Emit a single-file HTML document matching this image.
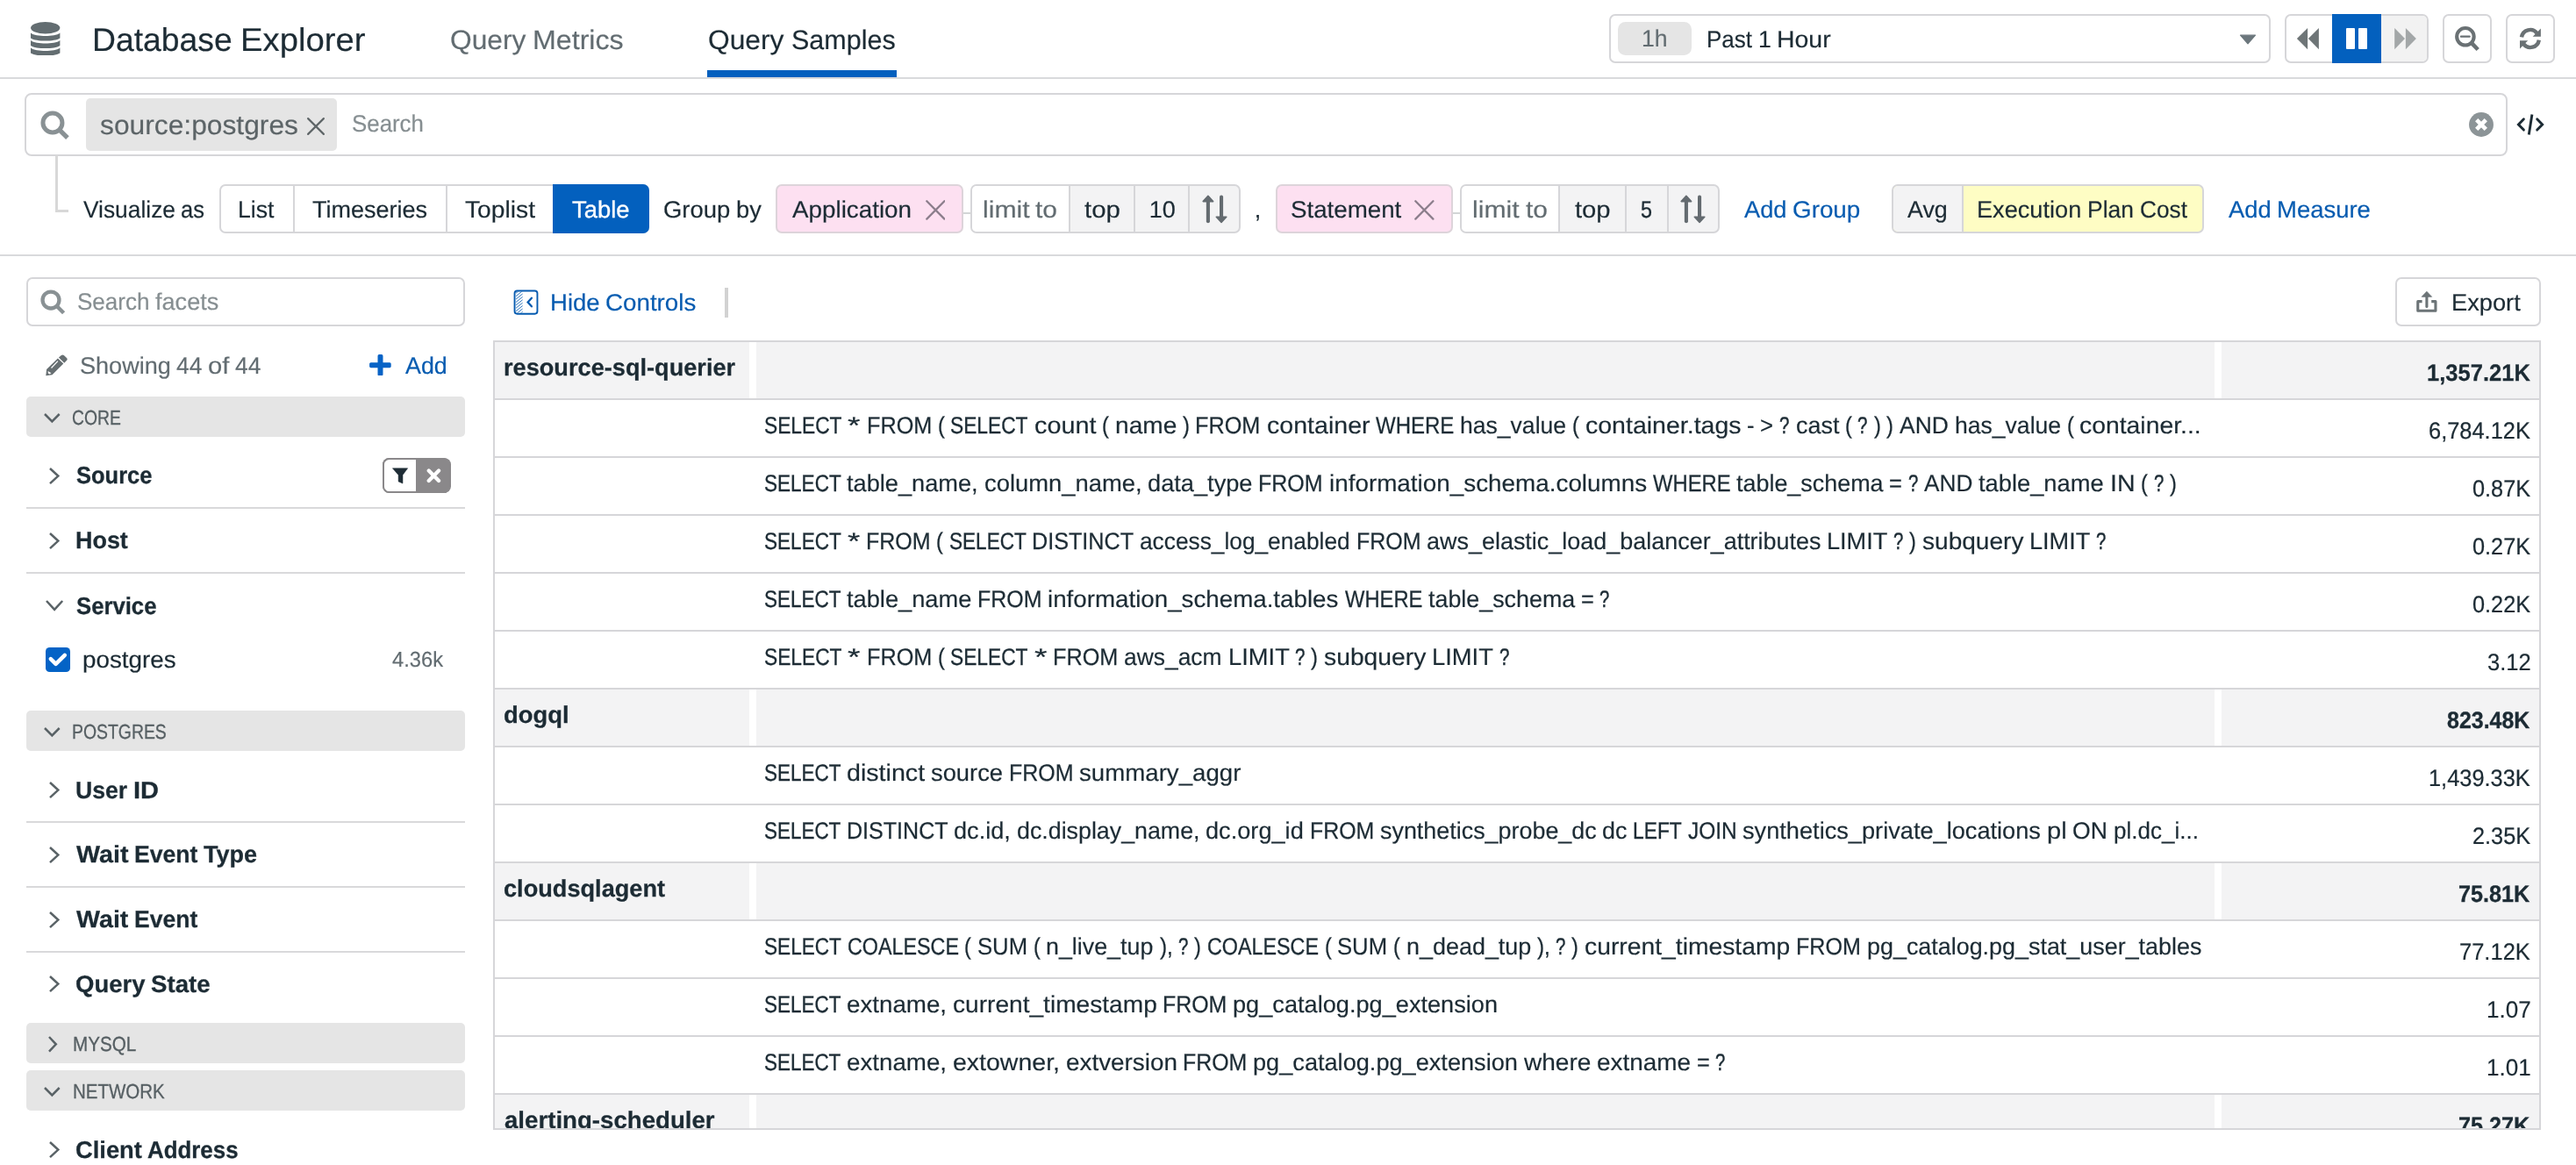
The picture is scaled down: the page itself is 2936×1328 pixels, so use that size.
<!DOCTYPE html>
<html><head><meta charset="utf-8"><title>Database Explorer</title>
<style>
html,body{margin:0;padding:0;background:#fff;}
body{width:2936px;height:1328px;position:relative;overflow:hidden;font-family:"Liberation Sans",sans-serif;color:#1c2b34;}
#root{position:absolute;left:0;top:0;width:2936px;height:1328px;overflow:hidden;will-change:transform;}
.b{position:absolute;box-sizing:border-box;}
.t{position:absolute;white-space:pre;line-height:1;text-rendering:geometricPrecision;transform-origin:0 50%;-webkit-text-stroke:0.18px currentColor;}
.tb{font-weight:bold;-webkit-text-stroke:0.25px currentColor;}
</style></head>
<body>
<div id="root">
<div class="b" style="left:0px;top:88px;width:2936px;height:2px;background:#d9dadc;"></div>
<svg class="b" style="left:35.3px;top:24.5px;" width="33.4" height="38.6" viewBox="0 0 33.4 38.6"><g fill="#636d71"><ellipse cx="16.7" cy="6.8" rx="16.7" ry="6.8"/><path d="M0,12.60 C3.2,15.20 10,16.10 16.7,16.10 S30.2,15.20 33.4,12.60 L33.4,18.50 C30.2,20.70 23.4,21.60 16.7,21.60 S3.2,20.70 0,18.50 Z"/><path d="M0,21.10 C3.2,23.70 10,24.60 16.7,24.60 S30.2,23.70 33.4,21.10 L33.4,27.00 C30.2,29.20 23.4,30.10 16.7,30.10 S3.2,29.20 0,27.00 Z"/><path d="M0,29.60 C3.2,32.20 10,33.10 16.7,33.10 S30.2,32.20 33.4,29.60 L33.4,35.50 C30.2,37.70 23.4,38.60 16.7,38.60 S3.2,37.70 0,35.50 Z"/></g></svg>
<span class="t" style="left:105.00px;top:27.01px;font-size:37.2px;transform:scaleX(1.0027);">Database</span><span class="t" style="left:273.98px;top:27.01px;font-size:37.2px;transform:scaleX(1.0284);">Explorer</span>
<span class="t" style="left:513.00px;top:30.59px;font-size:30.9px;color:#626c71;transform:scaleX(1.0277);">Query</span><span class="t" style="left:607.24px;top:30.59px;font-size:30.9px;color:#626c71;transform:scaleX(1.0419);">Metrics</span>
<span class="t" style="left:807.25px;top:30.59px;font-size:30.9px;transform:scaleX(1.0280);">Query</span><span class="t" style="left:901.51px;top:30.59px;font-size:30.9px;transform:scaleX(0.9875);">Samples</span>
<div class="b" style="left:806px;top:80px;width:216px;height:8px;background:#0360be;"></div>
<div class="b" style="left:1834px;top:16px;width:754px;height:56px;background:#fff;border:2px solid #d6d6d9;border-radius:7px;"></div>
<div class="b" style="left:1844px;top:25px;width:84px;height:38px;background:#e5e5e5;border-radius:8.5px;"></div>
<span class="t" style="left:1870.83px;top:30.59px;font-size:27px;color:#626c71;transform:scaleX(0.9846);">1h</span>
<span class="t" style="left:1945.00px;top:31.64px;font-size:27px;transform:scaleX(0.9629);">Past</span><span class="t" style="left:2003.77px;top:31.64px;font-size:27px;transform:scaleX(0.9879);">1</span><span class="t" style="left:2025.34px;top:31.64px;font-size:27px;transform:scaleX(1.0534);">Hour</span>
<svg class="b" style="left:2552px;top:39px;" width="20" height="12" viewBox="0 0 20 12"><path d="M1.5,1.2 L18.5,1.2 L10,10.8 Z" fill="#6b767c" stroke="#6b767c" stroke-width="1.2" stroke-linejoin="round"/></svg>
<div class="b" style="left:2604px;top:16px;width:164px;height:56px;background:#fff;border:2px solid #d6d6d9;border-radius:7px;"></div>
<div class="b" style="left:2714px;top:18px;width:52px;height:52px;background:#f2f2f2;border-radius:0 5px 5px 0;"></div>
<div class="b" style="left:2658px;top:16px;width:56px;height:56px;background:#0360be;"></div>
<svg class="b" style="left:2617px;top:31px;" width="27" height="27" viewBox="0 0 27 27"><g fill="#6e7577"><path d="M13.1,0.9 L13.1,25.3 L0.9,13.1 Z"/><path d="M25.9,0.9 L25.9,25.3 L13.9,13.1 Z"/></g></svg>
<div class="b" style="left:2673.6px;top:31.7px;width:10.4px;height:24.6px;background:#fff;border-radius:1px;"></div>
<div class="b" style="left:2687.9px;top:31.7px;width:10.2px;height:24.6px;background:#fff;border-radius:1px;"></div>
<svg class="b" style="left:2728px;top:31px;" width="27" height="27" viewBox="0 0 27 27"><g fill="#a3a7a8"><path d="M1.2,0.9 L1.2,25.3 L13,13.1 Z"/><path d="M13.9,0.9 L13.9,25.3 L25.9,13.1 Z"/></g></svg>
<div class="b" style="left:2784px;top:16px;width:56px;height:56px;background:#fff;border:2px solid #d6d6d9;border-radius:7px;"></div>
<svg class="b" style="left:2796px;top:28px;" width="32" height="32" viewBox="0 0 32 32"><g fill="none" stroke="#6a7174"><circle cx="13.9" cy="13.8" r="9.75" stroke-width="4.1"/><path d="M20.6,20.7 L28.2,28.5" stroke-width="4.6"/><path d="M8.9,13.65 L18.7,13.65" stroke-width="2.2" stroke-linecap="round"/></g></svg>
<div class="b" style="left:2856px;top:16px;width:56px;height:56px;background:#fff;border:2px solid #d6d6d9;border-radius:7px;"></div>
<svg class="b" style="left:2870px;top:30px;" width="28" height="28" viewBox="0 0 28 28"><g fill="none" stroke="#6a7174" stroke-width="4.4"><path d="M4.0,12.4 A9.9,9.9 0 0 1 21.6,7.8"/><path d="M23.8,15.6 A9.9,9.9 0 0 1 6.2,20.2"/></g><g fill="#6a7174"><path d="M25.9,2.6 L25.9,11.8 L16.7,11.8 Z"/><path d="M2.0,25.4 L2.0,16.2 L11.2,16.2 Z"/></g></svg>
<div class="b" style="left:28px;top:106px;width:2830px;height:72px;background:#fff;border:2px solid #d6d6d9;border-radius:8px;"></div>
<svg class="b" style="left:45.5px;top:125.5px;" width="34.0" height="34.0" viewBox="0 0 34 34"><g fill="none" stroke="#899194"><circle cx="13.95" cy="14" r="11" stroke-width="5"/><path d="M21.6,21.8 L30.9,31.1" stroke-width="5.2" stroke-linecap="butt"/></g></svg>
<div class="b" style="left:98px;top:112px;width:286px;height:60px;background:#e5e5e5;border-radius:5px;"></div>
<span class="t" style="left:114.25px;top:128.34px;font-size:30.9px;color:#5c6467;transform:scaleX(1.0281);">source:postgres</span>
<svg class="b" style="left:349px;top:133px;" width="22" height="22" viewBox="0 0 22 22"><path d="M2.1,2.1 L19.9,19.9 M19.9,2.1 L2.1,19.9" stroke="#5f6668" stroke-width="2.2" fill="none" stroke-linecap="round"/></svg>
<span class="t" style="left:400.79px;top:127.89px;font-size:27px;color:#868e91;transform:scaleX(0.9577);">Search</span>
<svg class="b" style="left:2814px;top:128px;" width="28" height="28" viewBox="0 0 28 28"><circle cx="14" cy="14" r="13.95" fill="#8c9497"/><path d="M8.7,8.7 L19.3,19.3 M19.3,8.7 L8.7,19.3" stroke="#fff" stroke-width="4.7" stroke-linecap="butt"/></svg>
<svg class="b" style="left:2867px;top:129px;" width="34" height="26" viewBox="0 0 34 26"><g fill="none" stroke="#1c2b34" stroke-width="2.9" stroke-linejoin="miter"><path d="M9.4,6.7 L3.4,12.9 L9.4,19.1" stroke-linecap="round"/><path d="M24.7,6.7 L30.7,12.9 L24.7,19.1" stroke-linecap="round"/><path d="M18.9,1.5 L15.3,24.5"/></g></svg>
<div class="b" style="left:62.5px;top:177px;width:3px;height:65px;background:#d8d8d8;"></div>
<div class="b" style="left:62.5px;top:239px;width:15.5px;height:3px;background:#d8d8d8;"></div>
<span class="t" style="left:94.50px;top:226.14px;font-size:27px;transform:scaleX(0.9757);">Visualize</span><span class="t" style="left:206.16px;top:226.14px;font-size:27px;-webkit-text-stroke:0.24px currentColor;transform:scaleX(0.9413);">as</span>
<div class="b" style="left:250px;top:210px;width:490px;height:56px;background:#fff;border:2px solid #d6d6d9;border-radius:7px;"></div>
<div class="b" style="left:334px;top:212px;width:2px;height:52px;background:#d6d6d9;"></div>
<div class="b" style="left:508px;top:212px;width:2px;height:52px;background:#d6d6d9;"></div>
<div class="b" style="left:630px;top:210px;width:110px;height:56px;background:#0360be;border-radius:0 7px 7px 0;"></div>
<span class="t" style="left:271.03px;top:226.14px;font-size:27px;transform:scaleX(0.9873);">List</span>
<span class="t" style="left:356.00px;top:226.14px;font-size:27px;">Timeseries</span>
<span class="t" style="left:529.50px;top:226.14px;font-size:27px;transform:scaleX(1.0451);">Toplist</span>
<span class="t" style="left:651.90px;top:226.14px;font-size:27px;color:#fff;-webkit-text-stroke:0.32px currentColor;transform:scaleX(1.0137);">Table</span>
<span class="t" style="left:756.00px;top:226.14px;font-size:27px;transform:scaleX(1.0166);">Group</span><span class="t" style="left:838.94px;top:226.14px;font-size:27px;transform:scaleX(1.0102);">by</span>
<div class="b" style="left:884px;top:210px;width:214px;height:56px;background:#fde0f1;border:2px solid #ddd4da;border-radius:7px;"></div>
<span class="t" style="left:903.25px;top:226.14px;font-size:27px;transform:scaleX(1.0300);">Application</span>
<svg class="b" style="left:1054.5px;top:228.4px;" width="22.7" height="22.9" viewBox="0 0 22.7 22.9"><path d="M1.3,1.3 L21.4,21.599999999999998 M21.4,1.3 L1.3,21.599999999999998" stroke="#8c7e8c" stroke-width="2.3" fill="none" stroke-linecap="round"/></svg>
<div class="b" style="left:1098px;top:242px;width:8px;height:2px;background:#d3d5d6;"></div>
<div class="b" style="left:1106px;top:210px;width:308px;height:56px;background:#f3f3f4;border:2px solid #d6d6d9;border-radius:7px;"></div>
<div class="b" style="left:1108px;top:212px;width:110px;height:52px;background:#fff;border-radius:5px 0 0 5px;"></div>
<div class="b" style="left:1218px;top:212px;width:2px;height:52px;background:#d6d6d9;"></div>
<div class="b" style="left:1292px;top:212px;width:2px;height:52px;background:#d6d6d9;"></div>
<div class="b" style="left:1354px;top:212px;width:2px;height:52px;background:#d6d6d9;"></div>
<span class="t" style="left:1119.75px;top:226.14px;font-size:27px;color:#626c71;transform:scaleX(1.1159);">limit</span><span class="t" style="left:1180.03px;top:226.14px;font-size:27px;color:#626c71;transform:scaleX(1.1098);">to</span>
<span class="t" style="left:1236.00px;top:226.14px;font-size:27px;transform:scaleX(1.0885);">top</span>
<span class="t" style="left:1309.75px;top:226.14px;font-size:27px;">10</span>
<svg class="b" style="left:1369.5px;top:221.5px;" width="29" height="33" viewBox="0 0 29 33"><g stroke="#646b70" stroke-width="4.1" fill="none" stroke-linecap="round"><path d="M6.9,6 L6.9,30.2"/><path d="M22.05,2.5 L22.05,27"/></g><g fill="#646b70" stroke="#646b70" stroke-width="1.6" stroke-linejoin="round"><path d="M6.9,1.3 L12.6,7.6 L1.2,7.6 Z"/><path d="M22.05,31.4 L27.8,25.3 L16.3,25.3 Z"/></g></svg>
<span class="t" style="left:1429.80px;top:226.14px;font-size:27px;">,</span>
<div class="b" style="left:1454px;top:210px;width:202px;height:56px;background:#fde0f1;border:2px solid #ddd4da;border-radius:7px;"></div>
<span class="t" style="left:1471.22px;top:226.14px;font-size:27px;transform:scaleX(1.0260);">Statement</span>
<svg class="b" style="left:1612.2px;top:228.4px;" width="22.7" height="22.9" viewBox="0 0 22.7 22.9"><path d="M1.3,1.3 L21.4,21.599999999999998 M21.4,1.3 L1.3,21.599999999999998" stroke="#8c7e8c" stroke-width="2.3" fill="none" stroke-linecap="round"/></svg>
<div class="b" style="left:1656px;top:242px;width:8px;height:2px;background:#d3d5d6;"></div>
<div class="b" style="left:1664px;top:210px;width:296px;height:56px;background:#f3f3f4;border:2px solid #d6d6d9;border-radius:7px;"></div>
<div class="b" style="left:1666px;top:212px;width:110px;height:52px;background:#fff;border-radius:5px 0 0 5px;"></div>
<div class="b" style="left:1776px;top:212px;width:2px;height:52px;background:#d6d6d9;"></div>
<div class="b" style="left:1852px;top:212px;width:2px;height:52px;background:#d6d6d9;"></div>
<div class="b" style="left:1900px;top:212px;width:2px;height:52px;background:#d6d6d9;"></div>
<span class="t" style="left:1678.25px;top:226.14px;font-size:27px;color:#626c71;transform:scaleX(1.1159);">limit</span><span class="t" style="left:1738.53px;top:226.14px;font-size:27px;color:#626c71;transform:scaleX(1.1098);">to</span>
<span class="t" style="left:1794.75px;top:226.14px;font-size:27px;transform:scaleX(1.0817);">top</span>
<span class="t" style="left:1869.63px;top:226.14px;font-size:27px;-webkit-text-stroke:0.33px currentColor;transform:scaleX(0.8654);">5</span>
<svg class="b" style="left:1915.3px;top:221.5px;" width="29" height="33" viewBox="0 0 29 33"><g stroke="#646b70" stroke-width="4.1" fill="none" stroke-linecap="round"><path d="M6.9,6 L6.9,30.2"/><path d="M22.05,2.5 L22.05,27"/></g><g fill="#646b70" stroke="#646b70" stroke-width="1.6" stroke-linejoin="round"><path d="M6.9,1.3 L12.6,7.6 L1.2,7.6 Z"/><path d="M22.05,31.4 L27.8,25.3 L16.3,25.3 Z"/></g></svg>
<span class="t" style="left:1987.50px;top:226.14px;font-size:27px;color:#065bb0;transform:scaleX(1.0093);">Add</span><span class="t" style="left:2042.73px;top:226.14px;font-size:27px;color:#065bb0;transform:scaleX(1.0299);">Group</span>
<div class="b" style="left:2156px;top:210px;width:356px;height:56px;background:#fefdc4;border:2px solid #d6d6d9;border-radius:7px;"></div>
<div class="b" style="left:2158px;top:212px;width:78px;height:52px;background:#f3f3f4;border-radius:5px 0 0 5px;"></div>
<div class="b" style="left:2236px;top:212px;width:2px;height:52px;background:#d6d6d9;"></div>
<span class="t" style="left:2174.00px;top:226.14px;font-size:27px;transform:scaleX(0.9940);">Avg</span>
<span class="t" style="left:2253.00px;top:226.14px;font-size:27px;transform:scaleX(1.0055);">Execution</span><span class="t" style="left:2378.98px;top:226.14px;font-size:27px;transform:scaleX(0.9817);">Plan</span><span class="t" style="left:2438.79px;top:226.14px;font-size:27px;transform:scaleX(0.9720);">Cost</span>
<span class="t" style="left:2539.50px;top:226.14px;font-size:27px;color:#065bb0;transform:scaleX(1.0125);">Add</span><span class="t" style="left:2594.91px;top:226.14px;font-size:27px;color:#065bb0;transform:scaleX(1.0172);">Measure</span>
<div class="b" style="left:0px;top:290px;width:2936px;height:2px;background:#d9dadc;"></div>
<div class="b" style="left:30px;top:316px;width:500px;height:56px;background:#fff;border:2px solid #d6d6d9;border-radius:7px;"></div>
<svg class="b" style="left:45.9px;top:330.1px;" width="29.24" height="29.24" viewBox="0 0 34 34"><g fill="none" stroke="#899194"><circle cx="13.95" cy="14" r="11" stroke-width="5"/><path d="M21.6,21.8 L30.9,31.1" stroke-width="5.2" stroke-linecap="butt"/></g></svg>
<span class="t" style="left:87.75px;top:331.39px;font-size:27px;color:#868e91;transform:scaleX(0.9645);">Search</span><span class="t" style="left:177.00px;top:331.39px;font-size:27px;color:#868e91;transform:scaleX(1.0030);">facets</span>
<svg class="b" style="left:51.5px;top:403.8px;" width="26" height="25" viewBox="0 0 26 25"><g fill="#676f72"><path d="M14.9,3.6 L17.9,1 Q19.4,-0.2 20.8,1.1 L24,4.1 Q25.3,5.4 24.1,6.8 L21.3,9.7 Z"/><path d="M13.9,4.6 L20.3,10.6 L7.5,23.3 L0.3,24.3 L1.1,17 Z"/></g><path d="M13.9,7.7 L6.5,15.5" stroke="#fff" stroke-width="1.2"/><path d="M2.6,19.1 L6.5,21.2 L4.3,22.6 L2.9,21.4 Z" fill="#fff"/></svg>
<span class="t" style="left:90.75px;top:403.89px;font-size:27px;color:#626c71;transform:scaleX(1.0022);">Showing</span><span class="t" style="left:201.21px;top:403.89px;font-size:27px;color:#626c71;transform:scaleX(0.9765);">44</span><span class="t" style="left:237.20px;top:403.89px;font-size:27px;color:#626c71;transform:scaleX(1.0804);">of</span><span class="t" style="left:268.19px;top:403.89px;font-size:27px;color:#626c71;transform:scaleX(0.9765);">44</span>
<svg class="b" style="left:421.1px;top:403.8px;" width="25" height="24.6" viewBox="0 0 25 24.6"><g fill="#0763c6"><rect x="9.5" y="0.1" width="6" height="24.3" rx="1.6"/><rect x="0.1" y="9.2" width="24.6" height="6" rx="1.6"/></g></svg>
<span class="t" style="left:462.00px;top:403.89px;font-size:27px;color:#065bb0;transform:scaleX(0.9942);">Add</span>
<div class="b" style="left:30px;top:452.25px;width:500px;height:45.5px;background:#e5e5e5;border-radius:5px;"></div>
<svg class="b" style="left:48.3px;top:468.85px;" width="22.7" height="14.4" viewBox="0 0 22.7 14.4"><path d="M3,3 L11.35,11.4 L19.7,3" stroke="#596266" stroke-width="2.5" fill="none" stroke-linecap="butt" stroke-linejoin="miter"/></svg>
<span class="t" style="left:82.42px;top:465.03px;font-size:23.3px;color:#565f63;-webkit-text-stroke:0.30px currentColor;transform:scaleX(0.8287);">CORE</span>
<svg class="b" style="left:54.1px;top:530.6px;" width="15.3" height="23.2" viewBox="0 0 15.3 23.2"><path d="M3,3 L12.3,11.6 L3,20.2" stroke="#596266" stroke-width="2.5" fill="none" stroke-linecap="butt" stroke-linejoin="miter"/></svg>
<span class="t tb" style="left:86.75px;top:528.39px;font-size:27.3px;-webkit-text-stroke:0.32px currentColor;transform:scaleX(0.9339);">Source</span>
<div class="b" style="left:30px;top:578px;width:500px;height:2px;background:#d9d9db;"></div>
<div class="b" style="left:436.1px;top:521.9px;width:78.1px;height:40.2px;background:#8a888a;border-radius:7.5px;"></div>
<div class="b" style="left:436.1px;top:521.9px;width:38px;height:40.2px;background:#fff;border:2px solid #8a888a;border-radius:7.5px 0 0 7.5px;border-right:none;"></div>
<svg class="b" style="left:446px;top:532.6px;" width="20" height="19.5" viewBox="0 0 20 19.5"><path d="M1.4,0.8 L18.7,0.8 L13,8.4 L13,18.1 L8.1,15.9 L8.1,8.4 Z" fill="#1f2d36" stroke="#1f2d36" stroke-width="0.5" stroke-linejoin="round"/></svg>
<svg class="b" style="left:485.5px;top:534px;" width="17" height="17" viewBox="0 0 17 17"><path d="M2.75,2.6 L14.05,13.9 M14.05,2.6 L2.75,13.9" stroke="#fff" stroke-width="4.3" fill="none" stroke-linecap="round"/></svg>
<svg class="b" style="left:54.1px;top:604.7px;" width="15.3" height="23.2" viewBox="0 0 15.3 23.2"><path d="M3,3 L12.3,11.6 L3,20.2" stroke="#596266" stroke-width="2.5" fill="none" stroke-linecap="butt" stroke-linejoin="miter"/></svg>
<span class="t tb" style="left:85.76px;top:602.49px;font-size:27.3px;transform:scaleX(0.9863);">Host</span>
<div class="b" style="left:30px;top:652px;width:500px;height:2px;background:#d9d9db;"></div>
<svg class="b" style="left:49.9px;top:682.4px;" width="24.2" height="15.8" viewBox="0 0 24.2 15.8"><path d="M3,3 L12.1,12.8 L21.2,3" stroke="#596266" stroke-width="2.5" fill="none" stroke-linecap="butt" stroke-linejoin="miter"/></svg>
<span class="t tb" style="left:86.75px;top:676.69px;font-size:27.3px;-webkit-text-stroke:0.31px currentColor;transform:scaleX(0.9411);">Service</span>
<div class="b" style="left:52.1px;top:737.9px;width:27.8px;height:28px;background:#0463c6;border-radius:4.6px;"></div>
<svg class="b" style="left:52px;top:738px;" width="28" height="28" viewBox="0 0 28 28"><path d="M5.8,13.1 L11.6,18.9 L21.8,8.9" stroke="#fff" stroke-width="4.5" fill="none" stroke-linecap="round" stroke-linejoin="round"/></svg>
<span class="t" style="left:93.97px;top:739.49px;font-size:27px;transform:scaleX(1.0288);">postgres</span>
<span class="t" style="left:446.75px;top:741.23px;font-size:24.6px;color:#626c71;transform:scaleX(0.9652);">4.36k</span>
<div class="b" style="left:30px;top:810px;width:500px;height:45.5px;background:#e5e5e5;border-radius:5px;"></div>
<svg class="b" style="left:48.3px;top:826.6px;" width="22.7" height="14.4" viewBox="0 0 22.7 14.4"><path d="M3,3 L11.35,11.4 L19.7,3" stroke="#596266" stroke-width="2.5" fill="none" stroke-linecap="butt" stroke-linejoin="miter"/></svg>
<span class="t" style="left:82.42px;top:822.78px;font-size:23.3px;color:#565f63;-webkit-text-stroke:0.30px currentColor;transform:scaleX(0.8326);">POSTGRES</span>
<svg class="b" style="left:54.1px;top:888.85px;" width="15.3" height="23.2" viewBox="0 0 15.3 23.2"><path d="M3,3 L12.3,11.6 L3,20.2" stroke="#596266" stroke-width="2.5" fill="none" stroke-linecap="butt" stroke-linejoin="miter"/></svg>
<span class="t tb" style="left:85.75px;top:886.64px;font-size:27.3px;transform:scaleX(0.9759);">User</span><span class="t tb" style="left:151.69px;top:886.64px;font-size:27.3px;transform:scaleX(1.0633);">ID</span>
<div class="b" style="left:30px;top:936px;width:500px;height:2px;background:#d9d9db;"></div>
<svg class="b" style="left:54.1px;top:962.6px;" width="15.3" height="23.2" viewBox="0 0 15.3 23.2"><path d="M3,3 L12.3,11.6 L3,20.2" stroke="#596266" stroke-width="2.5" fill="none" stroke-linecap="butt" stroke-linejoin="miter"/></svg>
<span class="t tb" style="left:86.75px;top:960.39px;font-size:27.3px;transform:scaleX(1.0513);">Wait</span><span class="t tb" style="left:152.96px;top:960.39px;font-size:27.3px;transform:scaleX(0.9742);">Event</span><span class="t tb" style="left:232.07px;top:960.39px;font-size:27.3px;transform:scaleX(0.9906);">Type</span>
<div class="b" style="left:30px;top:1010px;width:500px;height:2px;background:#d9d9db;"></div>
<svg class="b" style="left:54.1px;top:1036.6px;" width="15.3" height="23.2" viewBox="0 0 15.3 23.2"><path d="M3,3 L12.3,11.6 L3,20.2" stroke="#596266" stroke-width="2.5" fill="none" stroke-linecap="butt" stroke-linejoin="miter"/></svg>
<span class="t tb" style="left:86.75px;top:1034.39px;font-size:27.3px;transform:scaleX(1.0491);">Wait</span><span class="t tb" style="left:152.82px;top:1034.39px;font-size:27.3px;transform:scaleX(0.9722);">Event</span>
<div class="b" style="left:30px;top:1084px;width:500px;height:2px;background:#d9d9db;"></div>
<svg class="b" style="left:54.1px;top:1110.35px;" width="15.3" height="23.2" viewBox="0 0 15.3 23.2"><path d="M3,3 L12.3,11.6 L3,20.2" stroke="#596266" stroke-width="2.5" fill="none" stroke-linecap="butt" stroke-linejoin="miter"/></svg>
<span class="t tb" style="left:85.75px;top:1108.14px;font-size:27.3px;transform:scaleX(1.0073);">Query</span><span class="t tb" style="left:171.95px;top:1108.14px;font-size:27.3px;transform:scaleX(1.0147);">State</span>
<div class="b" style="left:30px;top:1166.25px;width:500px;height:45.5px;background:#e5e5e5;border-radius:5px;"></div>
<svg class="b" style="left:53.3px;top:1178.55px;" width="13.8" height="22.6" viewBox="0 0 13.8 22.6"><path d="M3,3 L10.8,11.3 L3,19.6" stroke="#596266" stroke-width="2.5" fill="none" stroke-linecap="butt" stroke-linejoin="miter"/></svg>
<span class="t" style="left:83.01px;top:1179.03px;font-size:23.3px;color:#565f63;-webkit-text-stroke:0.30px currentColor;transform:scaleX(0.8870);">MYSQL</span>
<div class="b" style="left:30px;top:1220.25px;width:500px;height:45.5px;background:#e5e5e5;border-radius:5px;"></div>
<svg class="b" style="left:48.3px;top:1236.85px;" width="22.7" height="14.4" viewBox="0 0 22.7 14.4"><path d="M3,3 L11.35,11.4 L19.7,3" stroke="#596266" stroke-width="2.5" fill="none" stroke-linecap="butt" stroke-linejoin="miter"/></svg>
<span class="t" style="left:83.02px;top:1233.03px;font-size:23.3px;color:#565f63;-webkit-text-stroke:0.30px currentColor;transform:scaleX(0.8800);">NETWORK</span>
<svg class="b" style="left:54.1px;top:1299.35px;" width="15.3" height="23.2" viewBox="0 0 15.3 23.2"><path d="M3,3 L12.3,11.6 L3,20.2" stroke="#596266" stroke-width="2.5" fill="none" stroke-linecap="butt" stroke-linejoin="miter"/></svg>
<span class="t tb" style="left:85.75px;top:1297.14px;font-size:27.3px;transform:scaleX(1.0011);">Client</span><span class="t tb" style="left:168.40px;top:1297.14px;font-size:27.3px;-webkit-text-stroke:0.31px currentColor;transform:scaleX(0.9479);">Address</span>
<svg class="b" style="left:585.0px;top:329.5px;" width="29" height="29" viewBox="0 0 29 29"><defs><clipPath id="hc"><rect x="3.1" y="2.6" width="7.5" height="24"/></clipPath></defs><rect x="1.55" y="1.45" width="25.9" height="26.3" rx="2.9" fill="none" stroke="#065bb0" stroke-width="1.9"/><path d="M2.6,4.6 l8.6,-6.9 M2.6,8.0 l8.6,-6.9 M2.6,11.4 l8.6,-6.9 M2.6,14.8 l8.6,-6.9 M2.6,18.2 l8.6,-6.9 M2.6,21.6 l8.6,-6.9 M2.6,25.0 l8.6,-6.9 M2.6,28.4 l8.6,-6.9 M2.6,31.8 l8.6,-6.9 M2.6,35.2 l8.6,-6.9" stroke="#065bb0" stroke-width="0.85" fill="none" clip-path="url(#hc)"/><path d="M20.9,9.7 L16.6,14.5 L20.9,19.3" stroke="#065bb0" stroke-width="2.3" fill="none" stroke-linecap="round" stroke-linejoin="miter"/></svg>
<span class="t" style="left:626.75px;top:331.64px;font-size:27px;color:#065bb0;transform:scaleX(1.0205);">Hide</span><span class="t" style="left:690.18px;top:331.64px;font-size:27px;color:#065bb0;transform:scaleX(1.0276);">Controls</span>
<div class="b" style="left:826.25px;top:328px;width:3.75px;height:33.75px;background:#d2d2d2;"></div>
<div class="b" style="left:2730px;top:316px;width:166px;height:56px;background:#fff;border:2px solid #d6d6d9;border-radius:7px;"></div>
<svg class="b" style="left:2754px;top:331px;" width="24" height="26" viewBox="0 0 24 26"><g fill="none" stroke="#6c7477" stroke-width="3.1"><path d="M6.6,12.65 L1.75,12.65 L1.75,23.25 L21.95,23.25 L21.95,12.65 L17.2,12.65" stroke-linejoin="round"/><path d="M11.9,6.5 L11.9,18.4" stroke-linecap="round"/></g><path d="M11.9,1.3 L17.6,7.3 L6.2,7.3 Z" fill="#6c7477" stroke="#6c7477" stroke-width="0.8" stroke-linejoin="round"/></svg>
<span class="t" style="left:2793.98px;top:331.64px;font-size:27px;transform:scaleX(1.0087);">Export</span>
<div class="b" style="left:562px;top:388px;width:2334px;height:900px;background:#fff;border:2px solid #d6d6d9;"></div>
<div class="b" style="left:564px;top:390px;width:2330px;height:896px;overflow:hidden;">
<div class="b" style="left:0;top:0px;width:290px;height:64px;background:#f3f3f4;"></div>
<div class="b" style="left:298px;top:0px;width:1662px;height:64px;background:#f3f3f4;"></div>
<div class="b" style="left:1968px;top:0px;width:362px;height:64px;background:#f3f3f4;"></div>
<div class="b" style="left:0;top:64px;width:2330px;height:2px;background:#d6d6d9;"></div>
<div class="b" style="left:0;top:130px;width:2330px;height:2px;background:#d6d6d9;"></div>
<div class="b" style="left:0;top:196px;width:2330px;height:2px;background:#d6d6d9;"></div>
<div class="b" style="left:0;top:262px;width:2330px;height:2px;background:#d6d6d9;"></div>
<div class="b" style="left:0;top:328px;width:2330px;height:2px;background:#d6d6d9;"></div>
<div class="b" style="left:0;top:394px;width:2330px;height:2px;background:#d6d6d9;"></div>
<div class="b" style="left:0;top:396px;width:290px;height:64px;background:#f3f3f4;"></div>
<div class="b" style="left:298px;top:396px;width:1662px;height:64px;background:#f3f3f4;"></div>
<div class="b" style="left:1968px;top:396px;width:362px;height:64px;background:#f3f3f4;"></div>
<div class="b" style="left:0;top:460px;width:2330px;height:2px;background:#d6d6d9;"></div>
<div class="b" style="left:0;top:526px;width:2330px;height:2px;background:#d6d6d9;"></div>
<div class="b" style="left:0;top:592px;width:2330px;height:2px;background:#d6d6d9;"></div>
<div class="b" style="left:0;top:594px;width:290px;height:64px;background:#f3f3f4;"></div>
<div class="b" style="left:298px;top:594px;width:1662px;height:64px;background:#f3f3f4;"></div>
<div class="b" style="left:1968px;top:594px;width:362px;height:64px;background:#f3f3f4;"></div>
<div class="b" style="left:0;top:658px;width:2330px;height:2px;background:#d6d6d9;"></div>
<div class="b" style="left:0;top:724px;width:2330px;height:2px;background:#d6d6d9;"></div>
<div class="b" style="left:0;top:790px;width:2330px;height:2px;background:#d6d6d9;"></div>
<div class="b" style="left:0;top:856px;width:2330px;height:2px;background:#d6d6d9;"></div>
<div class="b" style="left:0;top:858px;width:290px;height:64px;background:#f3f3f4;"></div>
<div class="b" style="left:298px;top:858px;width:1662px;height:64px;background:#f3f3f4;"></div>
<div class="b" style="left:1968px;top:858px;width:362px;height:64px;background:#f3f3f4;"></div>
<div class="b" style="left:0;top:922px;width:2330px;height:2px;background:#d6d6d9;"></div>
</div>
<div class="b" style="left:0;top:0;width:2936px;height:1286px;overflow:hidden;">
<span class="t tb" style="left:574.01px;top:405.09px;font-size:27.3px;transform:scaleX(0.9949);">resource-sql-querier</span>
<span class="t tb" style="left:2765.55px;top:411.56px;font-size:26.8px;transform:scaleX(0.9529);">1,357.21K</span>
<span class="t" style="left:871.00px;top:471.64px;font-size:27px;-webkit-text-stroke:0.35px currentColor;transform:scaleX(0.8424);">SELECT</span><span class="t" style="left:966.30px;top:471.64px;font-size:27px;transform:scaleX(1.3768);">*</span><span class="t" style="left:987.60px;top:471.64px;font-size:27px;-webkit-text-stroke:0.25px currentColor;transform:scaleX(0.9345);">FROM</span><span class="t" style="left:1068.70px;top:471.64px;font-size:27px;-webkit-text-stroke:0.32px currentColor;transform:scaleX(0.8760);">(</span><span class="t" style="left:1083.40px;top:471.64px;font-size:27px;-webkit-text-stroke:0.35px currentColor;transform:scaleX(0.8424);">SELECT</span><span class="t" style="left:1178.70px;top:471.64px;font-size:27px;transform:scaleX(1.0661);">count</span><span class="t" style="left:1255.95px;top:471.64px;font-size:27px;-webkit-text-stroke:0.32px currentColor;transform:scaleX(0.8760);">(</span><span class="t" style="left:1270.65px;top:471.64px;font-size:27px;transform:scaleX(1.0410);">name</span><span class="t" style="left:1347.78px;top:471.64px;font-size:27px;-webkit-text-stroke:0.32px currentColor;transform:scaleX(0.8760);">)</span><span class="t" style="left:1362.49px;top:471.64px;font-size:27px;-webkit-text-stroke:0.25px currentColor;transform:scaleX(0.9345);">FROM</span><span class="t" style="left:1443.59px;top:471.64px;font-size:27px;transform:scaleX(1.0585);">container</span><span class="t" style="left:1567.98px;top:471.64px;font-size:27px;-webkit-text-stroke:0.30px currentColor;transform:scaleX(0.8895);">WHERE</span><span class="t" style="left:1664.21px;top:471.64px;font-size:27px;transform:scaleX(0.9835);">has_value</span><span class="t" style="left:1792.09px;top:471.64px;font-size:27px;-webkit-text-stroke:0.32px currentColor;transform:scaleX(0.8760);">(</span><span class="t" style="left:1806.79px;top:471.64px;font-size:27px;transform:scaleX(1.0560);">container.tags</span><span class="t" style="left:1991.15px;top:471.64px;font-size:27px;-webkit-text-stroke:0.25px currentColor;transform:scaleX(0.9403);">-</span><span class="t" style="left:2006.43px;top:471.64px;font-size:27px;transform:scaleX(0.9524);">&gt;</span><span class="t" style="left:2028.28px;top:471.64px;font-size:27px;-webkit-text-stroke:0.45px currentColor;transform:scaleX(0.7588);">?</span><span class="t" style="left:2046.50px;top:471.64px;font-size:27px;transform:scaleX(0.9973);">cast</span><span class="t" style="left:2102.71px;top:471.64px;font-size:27px;-webkit-text-stroke:0.32px currentColor;transform:scaleX(0.8760);">(</span><span class="t" style="left:2117.41px;top:471.64px;font-size:27px;-webkit-text-stroke:0.45px currentColor;transform:scaleX(0.7588);">?</span><span class="t" style="left:2135.63px;top:471.64px;font-size:27px;-webkit-text-stroke:0.32px currentColor;transform:scaleX(0.8760);">)</span><span class="t" style="left:2150.34px;top:471.64px;font-size:27px;-webkit-text-stroke:0.32px currentColor;transform:scaleX(0.8760);">)</span><span class="t" style="left:2165.04px;top:471.64px;font-size:27px;transform:scaleX(0.9801);">AND</span><span class="t" style="left:2227.74px;top:471.64px;font-size:27px;transform:scaleX(0.9835);">has_value</span><span class="t" style="left:2355.62px;top:471.64px;font-size:27px;-webkit-text-stroke:0.32px currentColor;transform:scaleX(0.8760);">(</span><span class="t" style="left:2370.32px;top:471.64px;font-size:27px;transform:scaleX(1.0499);">container...</span>
<span class="t" style="left:2768.05px;top:477.81px;font-size:26.8px;-webkit-text-stroke:0.24px currentColor;transform:scaleX(0.9480);">6,784.12K</span>
<span class="t" style="left:871.00px;top:537.64px;font-size:27px;-webkit-text-stroke:0.36px currentColor;transform:scaleX(0.8349);">SELECT</span><span class="t" style="left:965.45px;top:537.64px;font-size:27px;transform:scaleX(1.0066);">table_name,</span><span class="t" style="left:1121.81px;top:537.64px;font-size:27px;transform:scaleX(1.0144);">column_name,</span><span class="t" style="left:1308.22px;top:537.64px;font-size:27px;transform:scaleX(1.0075);">data_type</span><span class="t" style="left:1434.47px;top:537.64px;font-size:27px;-webkit-text-stroke:0.26px currentColor;transform:scaleX(0.9261);">FROM</span><span class="t" style="left:1514.85px;top:537.64px;font-size:27px;transform:scaleX(1.0313);">information_schema.columns</span><span class="t" style="left:1883.77px;top:537.64px;font-size:27px;-webkit-text-stroke:0.31px currentColor;transform:scaleX(0.8816);">WHERE</span><span class="t" style="left:1979.13px;top:537.64px;font-size:27px;transform:scaleX(0.9968);">table_schema</span><span class="t" style="left:2153.47px;top:537.64px;font-size:27px;-webkit-text-stroke:0.24px currentColor;transform:scaleX(0.9439);">=</span><span class="t" style="left:2175.12px;top:537.64px;font-size:27px;-webkit-text-stroke:0.45px currentColor;transform:scaleX(0.7520);">?</span><span class="t" style="left:2193.17px;top:537.64px;font-size:27px;transform:scaleX(0.9713);">AND</span><span class="t" style="left:2255.31px;top:537.64px;font-size:27px;transform:scaleX(1.0107);">table_name</span><span class="t" style="left:2404.69px;top:537.64px;font-size:27px;transform:scaleX(1.0591);">IN</span><span class="t" style="left:2440.06px;top:537.64px;font-size:27px;-webkit-text-stroke:0.32px currentColor;transform:scaleX(0.8682);">(</span><span class="t" style="left:2454.63px;top:537.64px;font-size:27px;-webkit-text-stroke:0.45px currentColor;transform:scaleX(0.7520);">?</span><span class="t" style="left:2472.69px;top:537.64px;font-size:27px;-webkit-text-stroke:0.32px currentColor;transform:scaleX(0.8682);">)</span>
<span class="t" style="left:2817.81px;top:543.81px;font-size:26.8px;-webkit-text-stroke:0.24px currentColor;transform:scaleX(0.9435);">0.87K</span>
<span class="t" style="left:871.00px;top:603.64px;font-size:27px;-webkit-text-stroke:0.36px currentColor;transform:scaleX(0.8355);">SELECT</span><span class="t" style="left:965.52px;top:603.64px;font-size:27px;transform:scaleX(1.3655);">*</span><span class="t" style="left:986.64px;top:603.64px;font-size:27px;-webkit-text-stroke:0.26px currentColor;transform:scaleX(0.9268);">FROM</span><span class="t" style="left:1067.07px;top:603.64px;font-size:27px;-webkit-text-stroke:0.32px currentColor;transform:scaleX(0.8688);">(</span><span class="t" style="left:1081.65px;top:603.64px;font-size:27px;-webkit-text-stroke:0.36px currentColor;transform:scaleX(0.8355);">SELECT</span><span class="t" style="left:1176.17px;top:603.64px;font-size:27px;-webkit-text-stroke:0.25px currentColor;transform:scaleX(0.9328);">DISTINCT</span><span class="t" style="left:1299.08px;top:603.64px;font-size:27px;transform:scaleX(0.9735);">access_log_enabled</span><span class="t" style="left:1545.51px;top:603.64px;font-size:27px;-webkit-text-stroke:0.26px currentColor;transform:scaleX(0.9268);">FROM</span><span class="t" style="left:1625.94px;top:603.64px;font-size:27px;transform:scaleX(0.9983);">aws_elastic_load_balancer_attributes</span><span class="t" style="left:2082.22px;top:603.64px;font-size:27px;transform:scaleX(1.0045);">LIMIT</span><span class="t" style="left:2158.30px;top:603.64px;font-size:27px;-webkit-text-stroke:0.45px currentColor;transform:scaleX(0.7526);">?</span><span class="t" style="left:2176.37px;top:603.64px;font-size:27px;-webkit-text-stroke:0.32px currentColor;transform:scaleX(0.8688);">)</span><span class="t" style="left:2190.96px;top:603.64px;font-size:27px;transform:scaleX(1.0390);">subquery</span><span class="t" style="left:2313.13px;top:603.64px;font-size:27px;transform:scaleX(1.0045);">LIMIT</span><span class="t" style="left:2389.22px;top:603.64px;font-size:27px;-webkit-text-stroke:0.45px currentColor;transform:scaleX(0.7526);">?</span>
<span class="t" style="left:2817.81px;top:609.81px;font-size:26.8px;-webkit-text-stroke:0.24px currentColor;transform:scaleX(0.9435);">0.27K</span>
<span class="t" style="left:871.00px;top:669.64px;font-size:27px;-webkit-text-stroke:0.36px currentColor;transform:scaleX(0.8330);">SELECT</span><span class="t" style="left:965.24px;top:669.64px;font-size:27px;transform:scaleX(1.0084);">table_name</span><span class="t" style="left:1114.28px;top:669.64px;font-size:27px;-webkit-text-stroke:0.26px currentColor;transform:scaleX(0.9240);">FROM</span><span class="t" style="left:1194.47px;top:669.64px;font-size:27px;transform:scaleX(1.0269);">information_schema.tables</span><span class="t" style="left:1532.56px;top:669.64px;font-size:27px;-webkit-text-stroke:0.31px currentColor;transform:scaleX(0.8796);">WHERE</span><span class="t" style="left:1627.71px;top:669.64px;font-size:27px;transform:scaleX(0.9946);">table_schema</span><span class="t" style="left:1801.65px;top:669.64px;font-size:27px;-webkit-text-stroke:0.24px currentColor;transform:scaleX(0.9418);">=</span><span class="t" style="left:1823.25px;top:669.64px;font-size:27px;-webkit-text-stroke:0.45px currentColor;transform:scaleX(0.7503);">?</span>
<span class="t" style="left:2817.81px;top:675.81px;font-size:26.8px;-webkit-text-stroke:0.24px currentColor;transform:scaleX(0.9435);">0.22K</span>
<span class="t" style="left:871.00px;top:735.64px;font-size:27px;-webkit-text-stroke:0.35px currentColor;transform:scaleX(0.8426);">SELECT</span><span class="t" style="left:966.32px;top:735.64px;font-size:27px;transform:scaleX(1.3771);">*</span><span class="t" style="left:987.62px;top:735.64px;font-size:27px;-webkit-text-stroke:0.25px currentColor;transform:scaleX(0.9347);">FROM</span><span class="t" style="left:1068.74px;top:735.64px;font-size:27px;-webkit-text-stroke:0.32px currentColor;transform:scaleX(0.8762);">(</span><span class="t" style="left:1083.44px;top:735.64px;font-size:27px;-webkit-text-stroke:0.35px currentColor;transform:scaleX(0.8426);">SELECT</span><span class="t" style="left:1178.77px;top:735.64px;font-size:27px;transform:scaleX(1.3771);">*</span><span class="t" style="left:1200.07px;top:735.64px;font-size:27px;-webkit-text-stroke:0.25px currentColor;transform:scaleX(0.9347);">FROM</span><span class="t" style="left:1281.18px;top:735.64px;font-size:27px;transform:scaleX(0.9777);">aws_acm</span><span class="t" style="left:1399.51px;top:735.64px;font-size:27px;transform:scaleX(1.0131);">LIMIT</span><span class="t" style="left:1476.24px;top:735.64px;font-size:27px;-webkit-text-stroke:0.45px currentColor;transform:scaleX(0.7590);">?</span><span class="t" style="left:1494.47px;top:735.64px;font-size:27px;-webkit-text-stroke:0.32px currentColor;transform:scaleX(0.8762);">)</span><span class="t" style="left:1509.17px;top:735.64px;font-size:27px;transform:scaleX(1.0478);">subquery</span><span class="t" style="left:1632.39px;top:735.64px;font-size:27px;transform:scaleX(1.0131);">LIMIT</span><span class="t" style="left:1709.12px;top:735.64px;font-size:27px;-webkit-text-stroke:0.45px currentColor;transform:scaleX(0.7590);">?</span>
<span class="t" style="left:2835.04px;top:741.81px;font-size:26.8px;transform:scaleX(0.9552);">3.12</span>
<span class="t tb" style="left:574.00px;top:801.09px;font-size:27.3px;transform:scaleX(1.0042);">dogql</span>
<span class="t tb" style="left:2789.00px;top:807.56px;font-size:26.8px;-webkit-text-stroke:0.33px currentColor;transform:scaleX(0.9317);">823.48K</span>
<span class="t" style="left:871.00px;top:867.64px;font-size:27px;-webkit-text-stroke:0.36px currentColor;transform:scaleX(0.8333);">SELECT</span><span class="t" style="left:965.27px;top:867.64px;font-size:27px;transform:scaleX(1.0601);">distinct</span><span class="t" style="left:1061.11px;top:867.64px;font-size:27px;transform:scaleX(1.0124);">source</span><span class="t" style="left:1149.90px;top:867.64px;font-size:27px;-webkit-text-stroke:0.26px currentColor;transform:scaleX(0.9244);">FROM</span><span class="t" style="left:1230.12px;top:867.64px;font-size:27px;transform:scaleX(1.0239);">summary_aggr</span>
<span class="t" style="left:2768.10px;top:873.81px;font-size:26.8px;-webkit-text-stroke:0.24px currentColor;transform:scaleX(0.9476);">1,439.33K</span>
<span class="t" style="left:871.00px;top:933.64px;font-size:27px;-webkit-text-stroke:0.37px currentColor;transform:scaleX(0.8313);">SELECT</span><span class="t" style="left:965.05px;top:933.64px;font-size:27px;-webkit-text-stroke:0.26px currentColor;transform:scaleX(0.9282);">DISTINCT</span><span class="t" style="left:1087.34px;top:933.64px;font-size:27px;transform:scaleX(1.0053);">dc.id,</span><span class="t" style="left:1158.96px;top:933.64px;font-size:27px;transform:scaleX(0.9925);">dc.display_name,</span><span class="t" style="left:1374.23px;top:933.64px;font-size:27px;transform:scaleX(1.0061);">dc.org_id</span><span class="t" style="left:1492.72px;top:933.64px;font-size:27px;-webkit-text-stroke:0.27px currentColor;transform:scaleX(0.9222);">FROM</span><span class="t" style="left:1572.75px;top:933.64px;font-size:27px;transform:scaleX(0.9963);">synthetics_probe_dc</span><span class="t" style="left:1826.22px;top:933.64px;font-size:27px;transform:scaleX(0.9949);">dc</span><span class="t" style="left:1861.33px;top:933.64px;font-size:27px;-webkit-text-stroke:0.35px currentColor;transform:scaleX(0.8447);">LEFT</span><span class="t" style="left:1923.82px;top:933.64px;font-size:27px;-webkit-text-stroke:0.28px currentColor;transform:scaleX(0.9070);">JOIN</span><span class="t" style="left:1986.34px;top:933.64px;font-size:27px;transform:scaleX(1.0067);">synthetics_private_locations</span><span class="t" style="left:2333.03px;top:933.64px;font-size:27px;transform:scaleX(1.0763);">pl</span><span class="t" style="left:2362.39px;top:933.64px;font-size:27px;transform:scaleX(0.9858);">ON</span><span class="t" style="left:2409.05px;top:933.64px;font-size:27px;transform:scaleX(0.9642);">pl.dc_i...</span>
<span class="t" style="left:2817.81px;top:939.81px;font-size:26.8px;-webkit-text-stroke:0.24px currentColor;transform:scaleX(0.9435);">2.35K</span>
<span class="t tb" style="left:574.01px;top:999.09px;font-size:27.3px;transform:scaleX(0.9949);">cloudsqlagent</span>
<span class="t tb" style="left:2802.06px;top:1005.56px;font-size:26.8px;-webkit-text-stroke:0.31px currentColor;transform:scaleX(0.9412);">75.81K</span>
<span class="t" style="left:871.00px;top:1065.64px;font-size:27px;-webkit-text-stroke:0.36px currentColor;transform:scaleX(0.8370);">SELECT</span><span class="t" style="left:965.69px;top:1065.64px;font-size:27px;-webkit-text-stroke:0.33px currentColor;transform:scaleX(0.8632);">COALESCE</span><span class="t" style="left:1099.41px;top:1065.64px;font-size:27px;-webkit-text-stroke:0.32px currentColor;transform:scaleX(0.8704);">(</span><span class="t" style="left:1114.02px;top:1065.64px;font-size:27px;transform:scaleX(0.9509);">SUM</span><span class="t" style="left:1177.86px;top:1065.64px;font-size:27px;-webkit-text-stroke:0.32px currentColor;transform:scaleX(0.8704);">(</span><span class="t" style="left:1192.46px;top:1065.64px;font-size:27px;transform:scaleX(0.9935);">n_live_tup</span><span class="t" style="left:1321.54px;top:1065.64px;font-size:27px;-webkit-text-stroke:0.29px currentColor;transform:scaleX(0.8984);">),</span><span class="t" style="left:1343.14px;top:1065.64px;font-size:27px;-webkit-text-stroke:0.45px currentColor;transform:scaleX(0.7540);">?</span><span class="t" style="left:1361.24px;top:1065.64px;font-size:27px;-webkit-text-stroke:0.32px currentColor;transform:scaleX(0.8704);">)</span><span class="t" style="left:1375.85px;top:1065.64px;font-size:27px;-webkit-text-stroke:0.33px currentColor;transform:scaleX(0.8632);">COALESCE</span><span class="t" style="left:1509.57px;top:1065.64px;font-size:27px;-webkit-text-stroke:0.32px currentColor;transform:scaleX(0.8704);">(</span><span class="t" style="left:1524.18px;top:1065.64px;font-size:27px;transform:scaleX(0.9509);">SUM</span><span class="t" style="left:1588.01px;top:1065.64px;font-size:27px;-webkit-text-stroke:0.32px currentColor;transform:scaleX(0.8704);">(</span><span class="t" style="left:1602.62px;top:1065.64px;font-size:27px;transform:scaleX(0.9976);">n_dead_tup</span><span class="t" style="left:1751.71px;top:1065.64px;font-size:27px;-webkit-text-stroke:0.29px currentColor;transform:scaleX(0.8984);">),</span><span class="t" style="left:1773.31px;top:1065.64px;font-size:27px;-webkit-text-stroke:0.45px currentColor;transform:scaleX(0.7540);">?</span><span class="t" style="left:1791.41px;top:1065.64px;font-size:27px;-webkit-text-stroke:0.32px currentColor;transform:scaleX(0.8704);">)</span><span class="t" style="left:1806.02px;top:1065.64px;font-size:27px;transform:scaleX(1.0478);">current_timestamp</span><span class="t" style="left:2047.06px;top:1065.64px;font-size:27px;-webkit-text-stroke:0.26px currentColor;transform:scaleX(0.9285);">FROM</span><span class="t" style="left:2127.64px;top:1065.64px;font-size:27px;transform:scaleX(0.9963);">pg_catalog.pg_stat_user_tables</span>
<span class="t" style="left:2803.05px;top:1071.81px;font-size:26.8px;transform:scaleX(0.9517);">77.12K</span>
<span class="t" style="left:871.00px;top:1131.64px;font-size:27px;-webkit-text-stroke:0.37px currentColor;transform:scaleX(0.8317);">SELECT</span><span class="t" style="left:965.09px;top:1131.64px;font-size:27px;transform:scaleX(1.0269);">extname,</span><span class="t" style="left:1085.88px;top:1131.64px;font-size:27px;transform:scaleX(1.0411);">current_timestamp</span><span class="t" style="left:1325.39px;top:1131.64px;font-size:27px;-webkit-text-stroke:0.27px currentColor;transform:scaleX(0.9226);">FROM</span><span class="t" style="left:1405.46px;top:1131.64px;font-size:27px;transform:scaleX(1.0060);">pg_catalog.pg_extension</span>
<span class="t" style="left:2834.05px;top:1137.81px;font-size:26.8px;transform:scaleX(0.9746);">1.07</span>
<span class="t" style="left:871.00px;top:1197.64px;font-size:27px;-webkit-text-stroke:0.37px currentColor;transform:scaleX(0.8313);">SELECT</span><span class="t" style="left:965.05px;top:1197.64px;font-size:27px;transform:scaleX(1.0265);">extname,</span><span class="t" style="left:1085.79px;top:1197.64px;font-size:27px;transform:scaleX(1.0555);">extowner,</span><span class="t" style="left:1214.51px;top:1197.64px;font-size:27px;transform:scaleX(1.0315);">extversion</span><span class="t" style="left:1348.18px;top:1197.64px;font-size:27px;-webkit-text-stroke:0.27px currentColor;transform:scaleX(0.9222);">FROM</span><span class="t" style="left:1428.22px;top:1197.64px;font-size:27px;transform:scaleX(1.0056);">pg_catalog.pg_extension</span><span class="t" style="left:1736.88px;top:1197.64px;font-size:27px;transform:scaleX(1.0376);">where</span><span class="t" style="left:1819.92px;top:1197.64px;font-size:27px;transform:scaleX(1.0338);">extname</span><span class="t" style="left:1933.71px;top:1197.64px;font-size:27px;-webkit-text-stroke:0.25px currentColor;transform:scaleX(0.9399);">=</span><span class="t" style="left:1955.27px;top:1197.64px;font-size:27px;-webkit-text-stroke:0.46px currentColor;transform:scaleX(0.7489);">?</span>
<span class="t" style="left:2834.05px;top:1203.81px;font-size:26.8px;transform:scaleX(0.9746);">1.01</span>
<span class="t tb" style="left:575.00px;top:1263.09px;font-size:27.3px;transform:scaleX(1.0126);">alerting-scheduler</span>
<span class="t tb" style="left:2802.06px;top:1269.56px;font-size:26.8px;-webkit-text-stroke:0.31px currentColor;transform:scaleX(0.9412);">75.27K</span>
</div>
</div>
</body></html>
